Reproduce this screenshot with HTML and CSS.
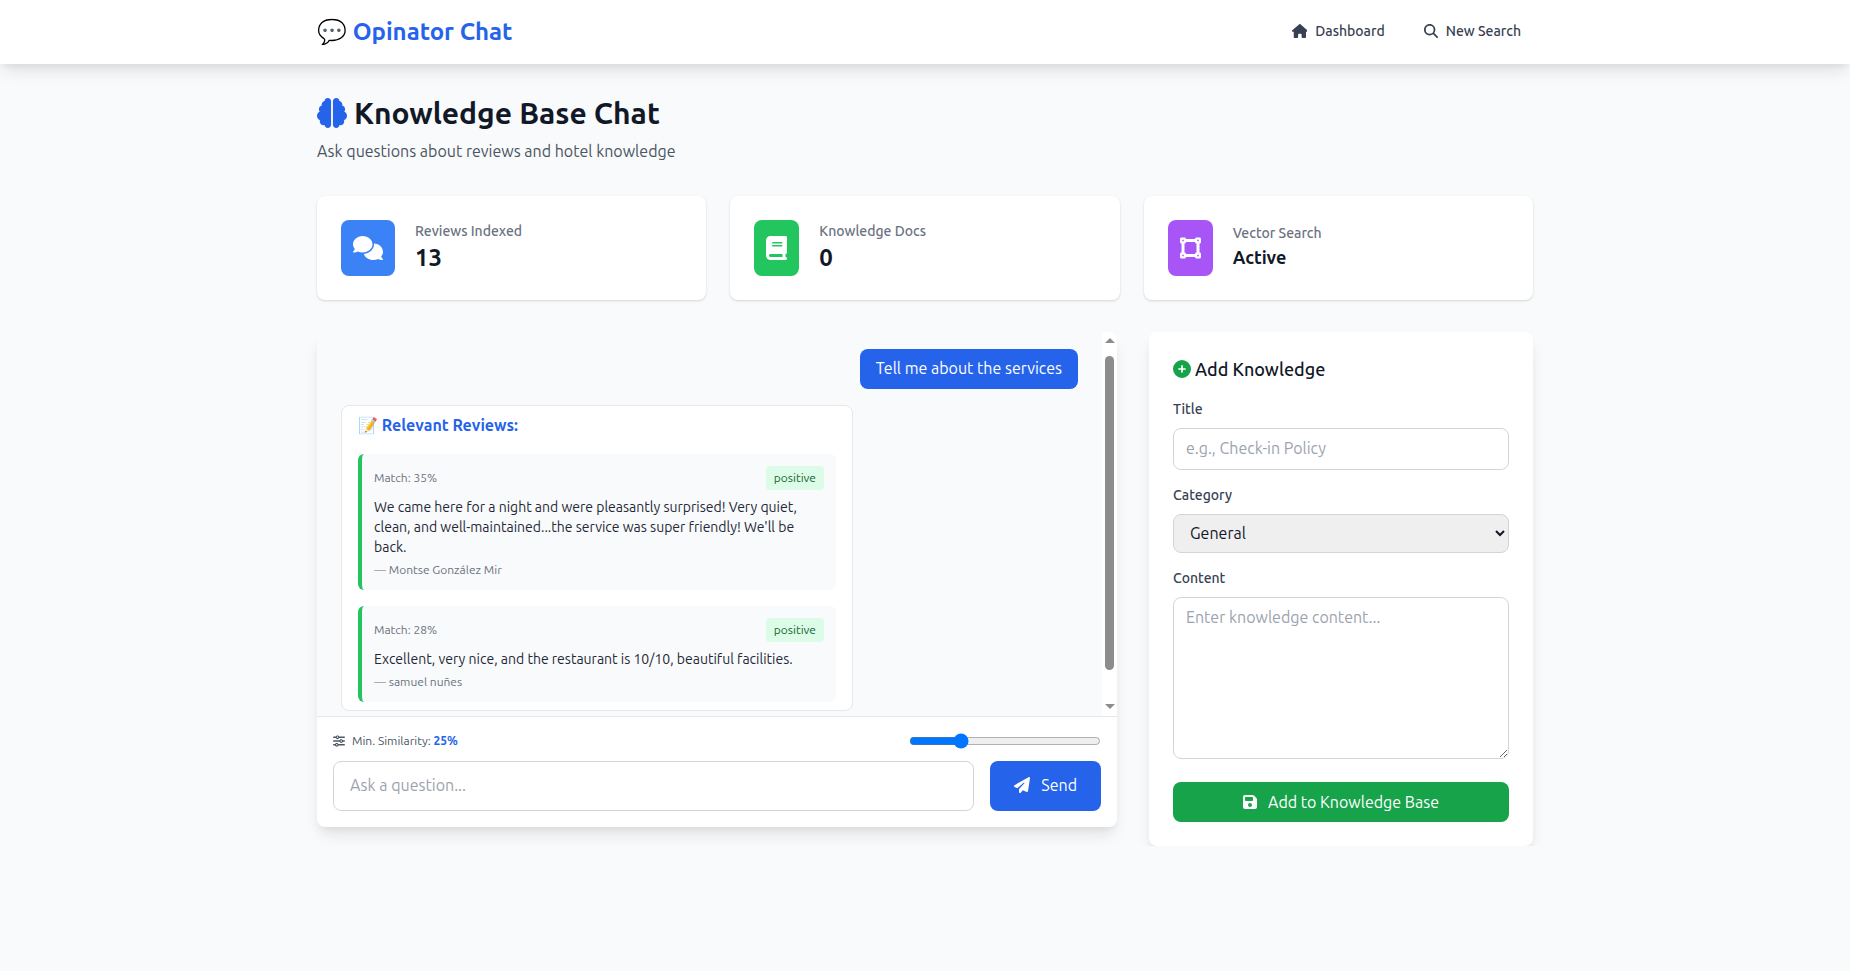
FILE: index.html
```html
<!DOCTYPE html>
<html lang="en">
<head>
    <meta charset="UTF-8">
    <meta name="viewport" content="width=device-width, initial-scale=1.0">
    <title>Knowledge Base Chat</title>
    <link rel="stylesheet" href="styles.css">
</head>
<body>
    <nav class="navbar">
        <div class="navbar-inner">
            <a class="brand"><span class="brand-emoji">💬</span> Opinator Chat</a>
            <div class="nav-links">
                <a class="nav-link">
                    <svg class="icon" viewBox="0 0 576 512"><path d="M575.8 255.5c0 18-15 32.1-32 32.1h-32l.7 160.2c0 2.7-.2 5.4-.5 8.1V472c0 22.1-17.9 40-40 40H456c-1.1 0-2.2 0-3.3-.1c-1.4 .1-2.8 .1-4.2 .1H416 392c-22.1 0-40-17.9-40-40V448 384c0-17.7-14.3-32-32-32H256c-17.7 0-32 14.3-32 32v64 24c0 22.1-17.9 40-40 40H160 128.1c-1.5 0-3-.1-4.5-.2c-1.2 .1-2.4 .2-3.6 .2H104c-22.1 0-40-17.9-40-40V360c0-.9 0-1.9 .1-2.8V287.6H32c-18 0-32-14-32-32.1c0-9 3-17 10-24L266.4 8c7-7 15-8 22-8s15 2 21 7L564.8 231.5c8 7 12 15 11 24z"/></svg>
                    Dashboard
                </a>
                <a class="nav-link">
                    <svg class="icon" viewBox="0 0 512 512"><path d="M416 208c0 45.9-14.9 88.3-40 122.7L502.6 457.4c12.5 12.5 12.5 32.8 0 45.3s-32.8 12.5-45.3 0L330.7 376c-34.4 25.2-76.8 40-122.7 40C93.1 416 0 322.9 0 208S93.1 0 208 0S416 93.1 416 208zM208 352a144 144 0 1 0 0-288 144 144 0 1 0 0 288z"/></svg>
                    New Search
                </a>
            </div>
        </div>
    </nav>

    <main class="page">
        <header class="page-header">
            <h1>
                <svg class="icon icon-brain" viewBox="0 0 512 512"><path d="M184 0c30.9 0 56 25.1 56 56V456c0 30.9-25.1 56-56 56c-28.9 0-52.7-21.9-55.7-50.1c-5.2 1.4-10.7 2.1-16.3 2.1c-35.3 0-64-28.7-64-64c0-7.4 1.3-14.6 3.6-21.2C21.4 367.4 0 338.2 0 304c0-31.9 18.7-59.5 45.8-72.3C37.1 220.8 32 207 32 192c0-30.7 21.6-56.3 50.4-62.6C80.8 123.9 80 118 80 112c0-29.9 20.6-55.1 48.3-62.1C131.3 21.9 155.1 0 184 0zM328 0c28.9 0 52.6 21.9 55.7 49.9c27.8 7 48.3 32.1 48.3 62.1c0 6-.8 11.9-2.4 17.4c28.8 6.2 50.4 31.9 50.4 62.6c0 15-5.1 28.8-13.8 39.7C493.3 244.5 512 272.1 512 304c0 34.2-21.4 63.4-51.6 74.8c2.3 6.6 3.6 13.8 3.6 21.2c0 35.3-28.7 64-64 64c-5.6 0-11.1-.7-16.3-2.1c-3 28.2-26.8 50.1-55.7 50.1c-30.9 0-56-25.1-56-56V56c0-30.9 25.1-56 56-56z"/></svg>
                Knowledge Base Chat
            </h1>
            <p>Ask questions about reviews and hotel knowledge</p>
        </header>

        <section class="stats">
            <div class="stat-card">
                <div class="stat-icon stat-blue">
                    <svg class="icon" viewBox="0 0 640 512"><path d="M208 352c114.9 0 208-78.8 208-176S322.9 0 208 0S0 78.8 0 176c0 38.6 14.7 74.3 39.6 103.4c-3.5 9.4-8.7 17.7-14.2 24.7c-4.8 6.2-9.7 11-13.3 14.3c-1.8 1.6-3.3 2.9-4.3 3.7c-.5 .4-.9 .7-1.1 .8l-.2 .2 0 0 0 0C1 327.2-1.4 334.4 .8 340.9S9.1 352 16 352c21.8 0 43.8-5.6 62.1-12.5c9.2-3.5 17.8-7.4 25.3-11.4C134.1 343.3 169.8 352 208 352zM448 176c0 112.3-99.1 196.9-216.5 207C255.8 457.4 336.4 512 432 512c38.2 0 73.9-8.7 104.7-23.9c7.5 4 16 7.9 25.2 11.4c18.3 6.9 40.3 12.5 62.1 12.5c6.9 0 13.1-4.5 15.2-11.1c2.1-6.6-.2-13.8-5.8-17.9l0 0 0 0-.2-.2c-.2-.2-.6-.4-1.1-.8c-1-.8-2.5-2-4.3-3.7c-3.6-3.3-8.5-8.1-13.3-14.3c-5.5-7-10.7-15.4-14.2-24.7c24.9-29 39.6-64.7 39.6-103.4c0-92.8-84.9-168.9-192.6-175.5c.4 5.1 .6 10.3 .6 15.5z"/></svg>
                </div>
                <div>
                    <div class="stat-label">Reviews Indexed</div>
                    <div class="stat-value">13</div>
                </div>
            </div>
            <div class="stat-card">
                <div class="stat-icon stat-green">
                    <svg class="icon" viewBox="0 0 448 512"><path d="M96 0C43 0 0 43 0 96V416c0 53 43 96 96 96H384h32c17.7 0 32-14.3 32-32s-14.3-32-32-32V384c17.7 0 32-14.3 32-32V32c0-17.7-14.3-32-32-32H384 96zm0 384H352v64H96c-17.7 0-32-14.3-32-32s14.3-32 32-32zm32-240c0-8.8 7.2-16 16-16H336c8.8 0 16 7.2 16 16s-7.2 16-16 16H144c-8.8 0-16-7.2-16-16zm16 48H336c8.8 0 16 7.2 16 16s-7.2 16-16 16H144c-8.8 0-16-7.2-16-16s7.2-16 16-16z"/></svg>
                </div>
                <div>
                    <div class="stat-label">Knowledge Docs</div>
                    <div class="stat-value">0</div>
                </div>
            </div>
            <div class="stat-card">
                <div class="stat-icon stat-purple">
                    <svg class="icon" viewBox="0 0 448 512"><path d="M368 80h32v32H368V80zM352 32c-17.7 0-32 14.3-32 32H128c0-17.7-14.3-32-32-32H32C14.3 32 0 46.3 0 64v64c0 17.7 14.3 32 32 32V352c-17.7 0-32 14.3-32 32v64c0 17.7 14.3 32 32 32H96c17.7 0 32-14.3 32-32H320c0 17.7 14.3 32 32 32h64c17.7 0 32-14.3 32-32V384c0-17.7-14.3-32-32-32V160c17.7 0 32-14.3 32-32V64c0-17.7-14.3-32-32-32H352zM96 160c17.7 0 32-14.3 32-32H320c0 17.7 14.3 32 32 32V352c-17.7 0-32 14.3-32 32H128c0-17.7-14.3-32-32-32V160zM48 400H80v32H48V400zm320 32V400h32v32H368zM48 112V80H80v32H48z"/></svg>
                </div>
                <div>
                    <div class="stat-label">Vector Search</div>
                    <div class="stat-value stat-value-small">Active</div>
                </div>
            </div>
        </section>

        <section class="columns">
            <div class="panel chat">
                <div class="chat-body">
                    <div class="chat-messages">
                        <div class="msg-user">Tell me about the services</div>
                        <div class="msg-bot">
                            <h4><span class="emoji">📝</span> Relevant Reviews:</h4>
                            <div class="review">
                                <div class="review-top">
                                    <span class="review-match">Match: 35%</span>
                                    <span class="badge">positive</span>
                                </div>
                                <p>We came here for a night and were pleasantly surprised! Very quiet, clean, and well-maintained...the service was super friendly! We'll be back.</p>
                                <div class="review-author">— Montse González Mir</div>
                            </div>
                            <div class="review">
                                <div class="review-top">
                                    <span class="review-match">Match: 28%</span>
                                    <span class="badge">positive</span>
                                </div>
                                <p>Excellent, very nice, and the restaurant is 10/10, beautiful facilities.</p>
                                <div class="review-author">— samuel nuñes</div>
                            </div>
                        </div>
                    </div>
                    <div class="scrollbar">
                        <span class="arrow-up"></span>
                        <span class="thumb"></span>
                        <span class="arrow-down"></span>
                    </div>
                </div>
                <div class="chat-controls">
                    <div class="similarity">
                        <label for="minSim">
                            <svg class="icon" viewBox="0 0 512 512"><path d="M0 416c0 17.7 14.3 32 32 32l54.7 0c12.3 28.3 40.5 48 73.3 48s61-19.7 73.3-48L480 448c17.7 0 32-14.3 32-32s-14.3-32-32-32l-246.7 0c-12.3-28.3-40.5-48-73.3-48s-61 19.7-73.3 48L32 384c-17.7 0-32 14.3-32 32zm128 0a32 32 0 1 1 64 0 32 32 0 1 1 -64 0zM320 256a32 32 0 1 1 64 0 32 32 0 1 1 -64 0zm32-80c-32.8 0-61 19.7-73.3 48L32 224c-17.7 0-32 14.3-32 32s14.3 32 32 32l246.7 0c12.3 28.3 40.5 48 73.3 48s61-19.7 73.3-48l54.7 0c17.7 0 32-14.3 32-32s-14.3-32-32-32l-54.7 0c-12.3-28.3-40.5-48-73.3-48zM192 128a32 32 0 1 1 0-64 32 32 0 1 1 0 64zm73.3-64C253 35.7 224.8 16 192 16s-61 19.7-73.3 48L32 64C14.3 64 0 78.3 0 96s14.3 32 32 32l86.7 0c12.3 28.3 40.5 48 73.3 48s61-19.7 73.3-48L480 128c17.7 0 32-14.3 32-32s-14.3-32-32-32L265.3 64z"/></svg>
                            <span>Min. Similarity: <b>25%</b></span>
                        </label>
                        <input type="range" id="minSim" min="0" max="100" value="25">
                    </div>
                    <form class="ask">
                        <input type="text" placeholder="Ask a question...">
                        <button type="button" class="btn btn-blue">
                            <svg class="icon" viewBox="0 0 512 512"><path d="M498.1 5.6c10.1 7 15.4 19.1 13.5 31.2l-64 416c-1.5 9.7-7.4 18.2-16 23s-18.9 5.4-28 1.6L284 427.7l-68.5 74.1c-8.9 9.7-22.9 12.9-35.2 8.1S160 493.2 160 480V396.4c0-4 1.5-7.8 4.2-10.7L331.8 202.8c5.8-6.3 5.6-16-.4-22s-15.7-6.4-22-.7L106 360.8 17.7 316.6C7.1 311.3 .3 300.7 0 288.9s5.9-22.8 16.1-28.7l448-256c10.7-6.1 23.9-5.5 34 1.4z"/></svg>
                            Send
                        </button>
                    </form>
                </div>
            </div>

            <aside class="panel knowledge">
                <h3>
                    <svg class="icon icon-plus" viewBox="0 0 512 512"><path d="M256 512A256 256 0 1 0 256 0a256 256 0 1 0 0 512zM232 344V280H168c-13.3 0-24-10.7-24-24s10.7-24 24-24h64V168c0-13.3 10.7-24 24-24s24 10.7 24 24v64h64c13.3 0 24 10.7 24 24s-10.7 24-24 24H280v64c0 13.3-10.7 24-24 24s-24-10.7-24-24z"/></svg>
                    Add Knowledge
                </h3>
                <form>
                    <div class="field">
                        <label for="title">Title</label>
                        <input type="text" id="title" placeholder="e.g., Check-in Policy">
                    </div>
                    <div class="field">
                        <label for="category">Category</label>
                        <select id="category">
                            <option>General</option>
                        </select>
                    </div>
                    <div class="field field-last">
                        <label for="content">Content</label>
                        <textarea id="content" rows="6" placeholder="Enter knowledge content..."></textarea>
                    </div>
                    <button type="button" class="btn btn-green">
                        <svg class="icon" viewBox="0 0 448 512"><path d="M64 32C28.7 32 0 60.7 0 96V416c0 35.3 28.7 64 64 64H384c35.3 0 64-28.7 64-64V173.3c0-17-6.7-33.3-18.7-45.3L352 50.7C340 38.7 323.7 32 306.7 32H64zm0 96c0-17.7 14.3-32 32-32H288c17.7 0 32 14.3 32 32v64c0 17.7-14.3 32-32 32H96c-17.7 0-32-14.3-32-32V128zM224 288a64 64 0 1 1 0 128 64 64 0 1 1 0-128z"/></svg>
                        Add to Knowledge Base
                    </button>
                </form>
            </aside>
        </section>
    </main>
</body>
</html>
```

FILE: styles.css
```css
* {
    box-sizing: border-box;
}
body {
    margin: 0;
    background-color: #f9fafb;
    color: #111827;
    font-family: Ubuntu, "Noto Sans", sans-serif;
    font-size: 16px;
    line-height: 24px;
}
h1, h3, h4, p {
    margin: 0;
}
.icon {
    height: 1em;
    width: auto;
    fill: currentColor;
    flex-shrink: 0;
}

/* navbar */
.navbar {
    background-color: #fff;
    box-shadow: 0 10px 15px -3px rgba(0, 0, 0, 0.1), 0 4px 6px -2px rgba(0, 0, 0, 0.05);
}
.navbar-inner, .page {
    max-width: 1280px;
    margin: 0 auto;
    padding: 0 32px;
}
.navbar-inner {
    height: 64px;
    display: flex;
    justify-content: space-between;
    align-items: center;
}
.brand {
    color: #2563eb;
    font-size: 24px;
    line-height: 32px;
    font-weight: 700;
}
.nav-links {
    display: flex;
    gap: 15px;
}
.nav-link {
    display: flex;
    align-items: center;
    gap: 8px;
    padding: 7px 12px 9px;
    color: #374151;
    font-size: 14px;
    line-height: 20px;
    font-weight: 500;
}

/* heading */
.page {
    padding-top: 32px;
}
.page-header {
    margin-bottom: 33px;
}
.page-header h1 {
    display: flex;
    align-items: center;
    gap: 7px;
    margin-top: -1px;
    font-size: 30px;
    line-height: 36px;
    font-weight: 700;
}
.icon-brain {
    color: #2563eb;
}
.page-header p {
    margin-top: 8px;
    color: #4b5563;
}

/* stats */
.stats {
    display: grid;
    grid-template-columns: repeat(3, 1fr);
    gap: 24px;
    margin-bottom: 32px;
}
.stat-card {
    display: flex;
    align-items: center;
    gap: 20px;
    padding: 24px;
    background-color: #fff;
    border-radius: 8px;
    box-shadow: 0 1px 3px rgba(0, 0, 0, 0.1), 0 1px 2px rgba(0, 0, 0, 0.06);
}
.stat-icon {
    display: flex;
    align-items: center;
    height: 56px;
    padding: 0 12px;
    border-radius: 8px;
    color: #fff;
    font-size: 24px;
}
.stat-blue {
    background-color: #3b82f6;
}
.stat-green {
    background-color: #22c55e;
}
.stat-purple {
    background-color: #a855f7;
}
.stat-label {
    margin: -1px 0 1px;
    color: #6b7280;
    font-size: 14px;
    line-height: 20px;
    font-weight: 500;
}
.stat-value {
    font-size: 24px;
    line-height: 32px;
    font-weight: 700;
}
.stat-value-small {
    margin: -1px 0 1px;
    font-size: 18px;
    line-height: 28px;
}

/* main columns */
.columns {
    display: grid;
    grid-template-columns: 800px 384px;
    gap: 32px;
    align-items: start;
}
.panel {
    background-color: #fff;
    border-radius: 8px;
    box-shadow: 0 10px 15px -3px rgba(0, 0, 0, 0.1), 0 4px 6px -2px rgba(0, 0, 0, 0.05);
}
.chat {
    overflow: hidden;
}
.chat-body {
    display: flex;
    height: 384px;
}
.chat-messages {
    flex: 1;
    overflow: hidden;
    padding: 17px 24px 0;
    background-color: #f9fafb;
}
.scrollbar {
    display: flex;
    flex-direction: column;
    align-items: center;
    width: 15px;
    padding: 6px 0 7px;
    background-color: #fff;
}
.arrow-up, .arrow-down {
    border-left: 5px solid transparent;
    border-right: 5px solid transparent;
}
.arrow-up {
    border-bottom: 5px solid #8c8c8c;
}
.arrow-down {
    margin-top: auto;
    border-top: 5px solid #8c8c8c;
}
.thumb {
    width: 9px;
    height: 314px;
    margin-top: 13px;
    background-color: #8c8c8c;
    border-radius: 5px;
}
.msg-user {
    width: fit-content;
    margin-left: auto;
    padding: 7px 16px 9px;
    background-color: #2563eb;
    color: #fff;
    border-radius: 8px;
}
.msg-bot {
    max-width: 512px;
    margin-top: 16px;
    padding: 8px 16px;
    background-color: #fff;
    border: 1px solid #e5e7eb;
    border-radius: 8px;
}
.msg-bot h4 {
    margin: -1px 0 17px;
    color: #2563eb;
    font-size: 16px;
    font-weight: 600;
}
.review {
    padding: 12px;
    background-color: #f9fafb;
    border-left: 4px solid #22c55e;
    border-radius: 6px;
}
.review + .review {
    margin-top: 16px;
}
.review-top {
    display: flex;
    justify-content: space-between;
    align-items: center;
    margin-bottom: 8px;
}
.review-match {
    color: #6b7280;
    font-size: 12px;
    line-height: 16px;
}
.badge {
    padding: 4px 8px;
    background-color: #dcfce7;
    color: #166534;
    border-radius: 4px;
    font-size: 12px;
    line-height: 16px;
}
.review p {
    margin: -1px 0 1px;
    color: #1f2937;
    font-size: 14px;
    line-height: 20px;
}
.review-author {
    margin-top: 5px;
    color: #6b7280;
    font-size: 12px;
    line-height: 16px;
}

/* chat input */
.chat-controls {
    padding: 16px;
    border-top: 1px solid #e5e7eb;
}
.similarity {
    display: flex;
    justify-content: space-between;
    align-items: center;
    height: 16px;
    margin-bottom: 12px;
}
.similarity label {
    display: flex;
    align-items: center;
    gap: 7px;
    color: #4b5563;
    font-size: 12px;
}
.similarity b {
    color: #2563eb;
    font-weight: 600;
}
.similarity input {
    width: 192px;
    margin: 0;
}
.ask {
    display: flex;
    gap: 16px;
}
input[type="text"], select, textarea {
    width: 100%;
    border: 1px solid #d1d5db;
    border-radius: 8px;
    font: inherit;
    color: inherit;
}
input::placeholder, textarea::placeholder {
    color: #9ca3af;
}
.ask input {
    flex: 1;
    height: 50px;
    padding: 11px 16px 13px;
}
.btn {
    display: flex;
    justify-content: center;
    align-items: center;
    gap: 11px;
    border: 0;
    border-radius: 8px;
    color: #fff;
    font: inherit;
}
.btn-blue {
    padding: 0 24px 2px;
    background-color: #2563eb;
}
.btn-green {
    width: 100%;
    height: 40px;
    padding-bottom: 2px;
    background-color: #16a34a;
}

/* add knowledge */
.knowledge {
    padding: 24px;
}
.knowledge h3 {
    display: flex;
    align-items: center;
    gap: 4px;
    margin: -1px 0 17px;
    font-size: 18px;
    line-height: 28px;
    font-weight: 500;
}
.icon-plus {
    color: #16a34a;
}
.field {
    margin-bottom: 16px;
}
.field-last {
    margin-bottom: 23px;
}
.field label {
    display: block;
    margin: -1px 0 9px;
    color: #374151;
    font-size: 14px;
    line-height: 20px;
    font-weight: 500;
}
.field input {
    display: block;
    height: 42px;
    padding: 7px 12px 9px;
}
.field select {
    display: block;
    height: 39px;
    padding: 7px 12px 9px;
    background-color: #efefef;
}
.field textarea {
    display: block;
    padding: 7px 12px 9px;
}
```
